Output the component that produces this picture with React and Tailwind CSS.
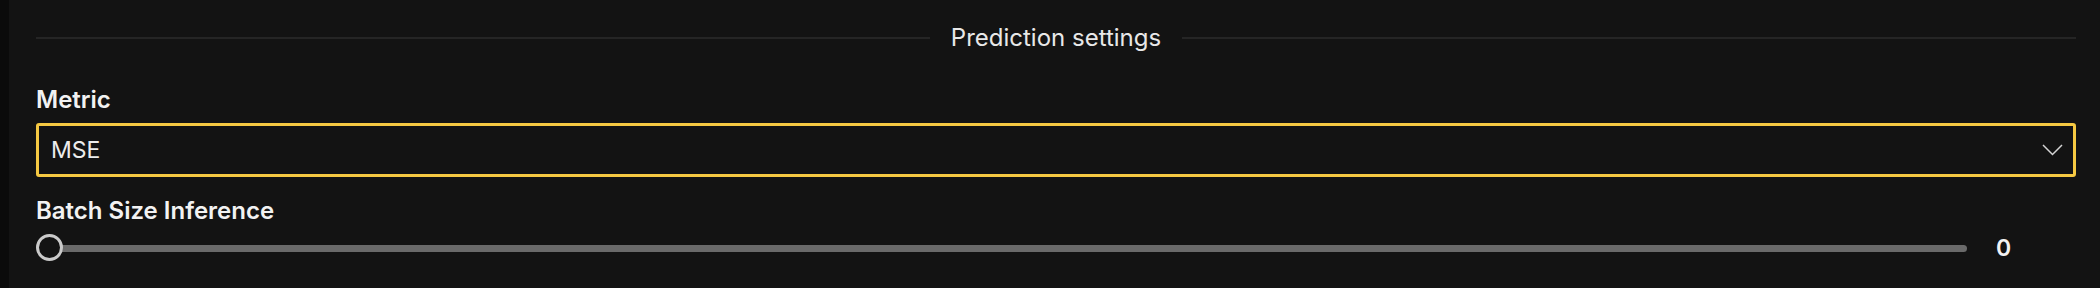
import React from "react";

const font = { fontFamily: "Inter, 'Noto Sans', sans-serif" };

const Chevron = () => (
  <svg width="21" height="12" viewBox="0 0 21 12" fill="none" className="shrink-0">
    <path d="M1 1l9.5 9.5L20 1" stroke="#d4d4d4" strokeWidth="1.5" />
  </svg>
);

export default function App() {
  return (
    <div className="flex w-[2100px] h-[288px] bg-[#131313] text-[#f2f2f2] overflow-hidden" style={font}>
      <div className="w-[9px] shrink-0 bg-[#0b0b0b]" />
      <div className="flex-1 flex flex-col pl-[27px] pr-[24px]">
        {/* section header */}
        <div className="flex items-center gap-[21px] pt-[24px]">
          <div className="flex-1 h-[2px] bg-[#252525]" />
          <span className="text-[24px] leading-[28px] text-[#e8e8e8]">Prediction settings</span>
          <div className="flex-1 h-[2px] bg-[#252525]" />
        </div>

        <label className="mt-[34px] text-[24px] leading-[28px] font-semibold">Metric</label>
        <div className="mt-[9px] h-[54px] flex items-center justify-between border-[3px] border-[#f5c842] rounded-[3px] pl-[12px] pr-[10px]">
          <span className="text-[23px] leading-[28px] text-[#ececec]">MSE</span>
          <Chevron />
        </div>

        <label className="mt-[20px] text-[24px] leading-[28px] font-semibold">Batch Size Inference</label>
        <div className="mt-[10px] h-[26px] flex items-center">
          <div className="relative flex-1 h-[26px] flex items-center">
            <div className="w-full h-[7px] rounded-full bg-[#6a6a6a]" />
            <div className="absolute left-0 top-[-1px] w-[27px] h-[27px] rounded-full border-[3px] border-[#cacaca] bg-[#131313]" />
          </div>
          <div className="w-[109px] pl-[29px] text-[23px] leading-[26px] font-semibold">0</div>
        </div>
      </div>
    </div>
  );
}
